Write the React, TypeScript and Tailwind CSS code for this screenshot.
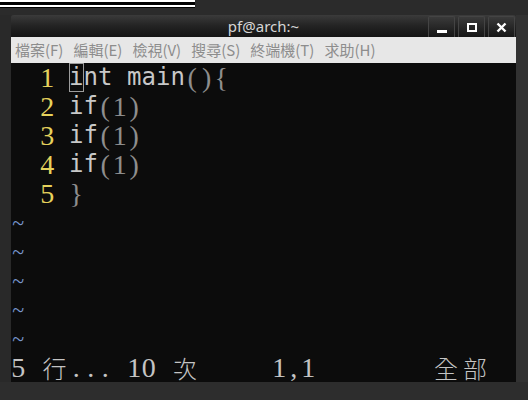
import React from 'react'

type Seg = { t: string; c: string }

const SANS = "font-['DejaVu_Sans_Mono',monospace] text-[24px] text-[#c8c8c8]"
const DIM = "font-['Liberation_Serif',serif] text-[28px] text-[#8e8e8e]"
const NUM = "font-['Liberation_Serif',serif] text-[28px] text-[#e6d25c]"
const STAT = "font-['Liberation_Serif',serif] text-[28px] text-[#c4c4c4]"
const CJK = "font-['Noto_Sans_CJK_TC',sans-serif] font-light text-[24px] text-[#c4c4c4]"
const TILDE = "font-['Liberation_Serif',serif] text-[22px] text-[#7896cc]"

const isWide = (ch: string) => ch.charCodeAt(0) > 0x2e80

function Line({ segs, cursor }: { segs: Seg[]; cursor?: number }) {
  let col = 0
  return (
    <div className="flex h-[29px] items-center leading-[29px]">
      {segs.flatMap((seg, si) =>
        [...seg.t].map((ch, i) => {
          const here = col
          col += isWide(ch) ? 2 : 1
          return (
            <span
              key={si + '-' + i}
              className={`inline-block h-[29px] text-center ${isWide(ch) ? 'w-[29px]' : 'w-[14.5px]'} ${
                cursor === here ? 'outline outline-1 outline-[#9c9c9c] -outline-offset-1' : ''
              } ${seg.c}`}
            >
              {ch === ' ' ? '\u00a0' : ch}
            </span>
          )
        })
      )}
    </div>
  )
}

const menu = ['檔案(F)', '編輯(E)', '檢視(V)', '搜尋(S)', '終端機(T)', '求助(H)']

function WinButton({ children }: { children: React.ReactNode }) {
  return (
    <div className="w-[27px] h-[21px] rounded-t-[2px] bg-gradient-to-b from-[#3a3a3a] to-[#161616] border-x border-t border-[#444] flex items-center justify-center">
      {children}
    </div>
  )
}

export default function App() {
  return (
    <div className="w-[528px] h-[400px] bg-[#2b2b2b] overflow-hidden flex flex-col">
      {/* desktop stripes */}
      <div className="h-[15px] flex flex-col">
        <div className="w-[195px] h-[2px] bg-white" />
        <div className="w-[195px] h-[3px] bg-black" />
        <div className="w-[195px] h-[2px] bg-white" />
        <div className="w-[195px] h-[1px] bg-black" />
      </div>

      <div className="flex">
        <div className="w-[11px] bg-[#292929]" />
        <div className="w-[505px] flex flex-col">
          {/* title bar */}
          <div className="h-[22px] grid grid-cols-[1fr_auto_1fr] items-center bg-gradient-to-b from-[#3b3b3b] via-[#232323] to-[#141414] rounded-t-[3px]">
            <div />
            <div className="font-['Noto_Sans',sans-serif] text-[15px] text-[#d6d6d6] leading-none pt-[1px]">pf@arch:~</div>
            <div className="flex justify-end items-end gap-[3px] pr-[1px] self-end">
              <WinButton>
                <div className="w-[10px] h-[3px] bg-white mt-[9px]" />
              </WinButton>
              <WinButton>
                <div className="w-[10px] h-[9px] border-2 border-white" />
              </WinButton>
              <WinButton>
                <svg width="11" height="11" viewBox="0 0 11 11">
                  <path d="M1.5 1.5 L9.5 9.5 M9.5 1.5 L1.5 9.5" stroke="white" strokeWidth="2.4" />
                </svg>
              </WinButton>
            </div>
          </div>

          {/* menu bar */}
          <div className="h-[26px] bg-[#e7e7e7] flex items-center gap-[10px] pl-[4px] font-['Noto_Sans_CJK_TC',sans-serif] text-[15px] text-[#8d8d8d]">
            {menu.map((m) => (
              <span key={m}>{m}</span>
            ))}
          </div>

          {/* terminal */}
          <div className="h-[319px] bg-[#0c0c0c] flex flex-col">
            <Line cursor={4} segs={[{ t: '  1 ', c: NUM }, { t: 'int main', c: SANS }, { t: '(){', c: DIM }]} />
            <Line segs={[{ t: '  2 ', c: NUM }, { t: 'if', c: SANS }, { t: '(1)', c: DIM }]} />
            <Line segs={[{ t: '  3 ', c: NUM }, { t: 'if', c: SANS }, { t: '(1)', c: DIM }]} />
            <Line segs={[{ t: '  4 ', c: NUM }, { t: 'if', c: SANS }, { t: '(1)', c: DIM }]} />
            <Line segs={[{ t: '  5 ', c: NUM }, { t: '}', c: DIM }]} />
            {[0, 1, 2, 3, 4].map((i) => (
              <Line key={i} segs={[{ t: '~', c: TILDE }]} />
            ))}
            <Line
              segs={[
                { t: '5 ', c: STAT },
                { t: '行', c: CJK },
                { t: '... 10 ', c: STAT },
                { t: '次', c: CJK },
                { t: '     1,1        ', c: STAT },
                { t: '全部', c: CJK },
              ]}
            />
          </div>
        </div>
        <div className="flex-1 bg-[#323232]" />
      </div>
      <div className="flex-1 bg-[#2d2d2d]" />
    </div>
  )
}
